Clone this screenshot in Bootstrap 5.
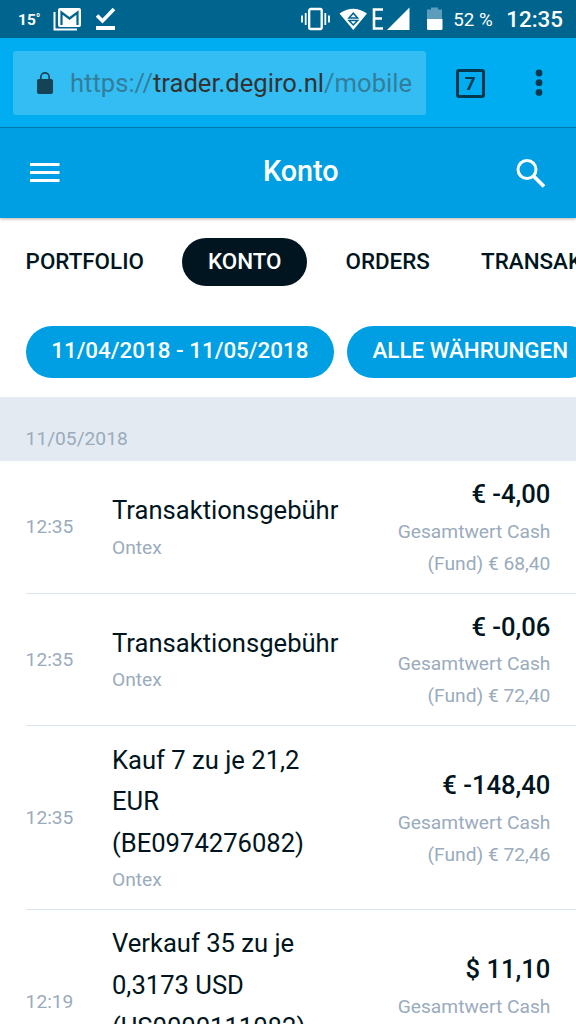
<!DOCTYPE html>
<html lang="de">
<head>
<meta charset="utf-8">
<meta name="viewport" content="width=device-width, initial-scale=1">
<title>Konto</title>
<link href="https://cdn.jsdelivr.net/npm/bootstrap@5.3.0/dist/css/bootstrap.min.css" rel="stylesheet">
<style>
  html, body { height: 1024px; overflow: hidden; }
  body { font-family: Roboto, sans-serif; color: #001520; background: #fff; }
  svg { display: block; flex: none; }
  .status-bar { height: 38.4px; background: #00658e; color: #fff; padding: 0 13px 0 18px; }
  .temp { font-size: 15.5px; font-weight: 700; width: 35px; padding-top: 2px; }
  .temp small { font-size: 12px; vertical-align: 2px; }
  .check-icon { margin-left: 14px; }
  .batt-text { font-size: 18.8px; width: 53px; padding-top: 1px; }
  .clock { font-size: 22.4px; font-weight: 500; padding-top: 2px; }
  .browser-bar { height: 89.6px; background: #00adf1; border-bottom: 1.6px solid #0080b4; padding: 0 13px; }
  .omnibox { width: 412.6px; height: 64px; background: #33bdf3; border-radius: 3px; padding-left: 24px; gap: 17px; font-size: 25.6px; color: #337d9b; }
  .omnibox .url { padding-top: 2px; }
  .omnibox .host { color: #333; }
  .tabs-btn { width: 29px; height: 29px; margin: 1px 0 0 30px; border: 3px solid #03394e; border-radius: 3px; font-size: 19px; font-weight: 700; color: #03394e; line-height: 1; }
  .menu-dots { margin: 1px 14px 0 auto; }
  .app-bar { height: 89.6px; background: #009fe3; color: #fff; padding: 0 30px; box-shadow: 0 1px 3px rgba(60,20,10,.35); position: relative; }
  .app-title { font-size: 28.8px; font-weight: 500; line-height: 1; padding: 0 0 2px 25.6px; }
  .section-nav { height: 89px; font-size: 22.4px; font-weight: 500; }
  .section-nav .nav-link { height: 48px; padding: 0 25.6px; color: #001520; }
  .section-nav .nav-link.active { background: #001520; color: #fff; margin: 0 12.8px; }
  .filters { padding: 19.8px 0 19.2px 25.6px; gap: 12.8px; }
  .filters .chip { height: 51.2px; padding: 0 25.6px 2px; background: #009fe3; color: #fff; font-size: 22.4px; font-weight: 500; border: 0; }
  .muted-text { font-size: 19.2px; line-height: 32px; color: #9aabbc; }
  .date-head { height: 64px; background: #e3eaf2; padding: 26px 0 0 25.6px; }
  .entry { margin-left: 25.6px; padding: 13.2px 25.6px 13px 0; border-bottom: 1px solid #d9e6f0; }
  .entry-time { width: 86.4px; }
  .entry-title { width: 232px; font-size: 25.6px; line-height: 41.6px; }
  .entry-sum { width: 170px; }
  .amount { font-size: 25.6px; line-height: 41.6px; font-weight: 500; }
</style>
</head>
<body>
<div class="status-bar d-flex align-items-center">
  <span class="temp">15<small>°</small></span>
  <svg width="29" height="24" viewBox="0 0 29 24"><path d="M1.500 5v17.500H24" fill="none" stroke="#fff" stroke-width="2"/><rect x="5" y="1" width="23" height="19" rx="2" fill="#fff"/><path d="M8.500 18V5.500l8 6 8-6V18" fill="none" stroke="#00658e" stroke-width="2.200"/></svg>
  <svg class="check-icon" width="20" height="24" viewBox="0 0 20 24"><path d="M1 8.500l5.500 5.500L18 2" fill="none" stroke="#fff" stroke-width="3.600"/><path d="M0 19h19v4H0z" fill="#fff"/></svg>
  <div class="d-flex align-items-center ms-auto">
    <svg width="144" height="26" viewBox="0 0 144 26"><g fill="none" stroke="#fff" stroke-width="1.800"><rect x="8.200" y="3" width="12.500" height="20" rx="1.500" stroke-width="2.300"/><path d="M1 9.500v7M4.700 7v12M24.300 7v12M28 9.500v7"/></g>
      <path d="M38.500 7.500Q52 -2 66 7.500L52.300 24z" fill="#fff"/><path d="M48 12l4.300-4.800 4.300 4.800zM48 14.500h8.600l-4.300 4.500z" fill="#fff" stroke="#00658e" stroke-width="1.500"/>
      <path d="M82 3.500H73v19h9M73 12.500h8" fill="none" stroke="#fff" stroke-width="2.600"/><path d="M108.500 1.500v22.500H86z" fill="#fff"/>
      <path d="M126 3.500h4V1.500h7v2h4V13h-15z" fill="#5b9dba"/><path d="M126 13h15.500v9.500q0 1.500-1.500 1.500h-12.500q-1.500 0-1.500-1.500z" fill="#fff"/></svg>
    <span class="batt-text ms-2 text-nowrap">52 %</span>
    <span class="clock">12:35</span>
  </div>
</div>
<div class="browser-bar d-flex align-items-center">
  <div class="omnibox d-flex align-items-center">
    <svg width="16" height="22" viewBox="0 0 16 22"><path d="M3.800 8V5a4.200 4.200 0 0 1 8.400 0v3" fill="none" stroke="#144356" stroke-width="1.700"/><rect y="7" width="16" height="15" rx="2" fill="#144356"/></svg>
    <span class="text-nowrap url">https://<span class="host">trader.degiro.nl</span>/mobile</span>
  </div>
  <span class="tabs-btn d-flex align-items-center justify-content-center">7</span>
  <svg class="menu-dots" width="14" height="28" viewBox="0 0 14 28" fill="#03394e"><circle cx="4" cy="4" r="3.400"/><circle cx="4" cy="13.700" r="3.400"/><circle cx="4" cy="23.400" r="3.400"/></svg>
</div>
<header class="app-bar d-flex align-items-center justify-content-between">
  <svg width="30" height="22" viewBox="0 0 30 22"><path d="M0 2.500h29.500M0 10.500h29.500M0 18.500h29.500" stroke="#fff" stroke-width="3.200"/></svg>
  <h1 class="app-title m-0">Konto</h1>
  <svg width="30" height="30" viewBox="0 0 30 30" fill="none" stroke="#fff" stroke-width="3"><circle cx="11" cy="11.500" r="9"/><path d="M17.500 18L28 28.500" stroke-width="3.800"/></svg>
</header>
<nav class="section-nav nav nav-pills flex-nowrap align-items-center overflow-hidden text-nowrap">
  <a class="nav-link d-flex align-items-center rounded-pill">PORTFOLIO</a>
  <a class="nav-link active d-flex align-items-center rounded-pill">KONTO</a>
  <a class="nav-link d-flex align-items-center rounded-pill">ORDERS</a>
  <a class="nav-link d-flex align-items-center rounded-pill">TRANSAKTIONEN</a>
</nav>
<div class="filters d-flex overflow-hidden text-nowrap">
  <button class="chip rounded-pill flex-shrink-0">11/04/2018 - 11/05/2018</button>
  <button class="chip rounded-pill flex-shrink-0">ALLE WÄHRUNGEN</button>
</div>
<main>
  <div class="date-head muted-text">11/05/2018</div>
  <div class="entry d-flex align-items-center">
    <div class="entry-time muted-text">12:35</div>
    <div><div class="entry-title">Transaktionsgebühr</div><div class="muted-text">Ontex</div></div>
    <div class="entry-sum ms-auto text-end"><div class="amount">€ -4,00</div><div class="muted-text">Gesamtwert Cash (Fund) € 68,40</div></div>
  </div>
  <div class="entry d-flex align-items-center">
    <div class="entry-time muted-text">12:35</div>
    <div><div class="entry-title">Transaktionsgebühr</div><div class="muted-text">Ontex</div></div>
    <div class="entry-sum ms-auto text-end"><div class="amount">€ -0,06</div><div class="muted-text">Gesamtwert Cash (Fund) € 72,40</div></div>
  </div>
  <div class="entry d-flex align-items-center">
    <div class="entry-time muted-text">12:35</div>
    <div><div class="entry-title">Kauf 7 zu je 21,2 EUR (BE0974276082)</div><div class="muted-text">Ontex</div></div>
    <div class="entry-sum ms-auto text-end"><div class="amount">€ -148,40</div><div class="muted-text">Gesamtwert Cash (Fund) € 72,46</div></div>
  </div>
  <div class="entry d-flex align-items-center">
    <div class="entry-time muted-text">12:19</div>
    <div><div class="entry-title">Verkauf 35 zu je 0,3173 USD (US0000111082)</div><div class="muted-text">&nbsp;</div></div>
    <div class="entry-sum ms-auto text-end"><div class="amount">$ 11,10</div><div class="muted-text">Gesamtwert Cash</div><div class="muted-text">&nbsp;</div></div>
  </div>
</main>
<script src="https://cdn.jsdelivr.net/npm/bootstrap@5.3.0/dist/js/bootstrap.bundle.min.js"></script>
</body>
</html>
